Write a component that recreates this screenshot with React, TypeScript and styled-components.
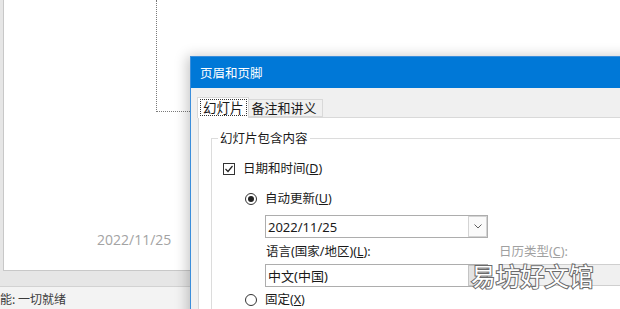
import React from "react";
import styled, { createGlobalStyle } from "styled-components";

const GlobalStyle = createGlobalStyle`
  html, body {
    margin: 0;
    padding: 0;
    width: 620px;
    height: 309px;
    overflow: hidden;
    background: #ffffff;
  }
  body {
    font-family: "Noto Sans", "Noto Sans CJK SC", sans-serif;
    color: #1a1a1a;
  }
  * { box-sizing: border-box; }
`;

const Screen = styled.div`
  position: relative;
  width: 620px;
  height: 309px;
  display: flex;
  flex-direction: column;
  overflow: hidden;
`;

const Workspace = styled.div`
  height: 288px;
  display: flex;
  background: #e6e6e6;
  padding: 0 0 15px 3px;
`;

const Slide = styled.div`
  position: relative;
  flex: 1;
  background: #ffffff;
  border-left: 1px solid #c8c8c8;
  border-bottom: 1px solid #c8c8c8;
`;

const Placeholder = styled.div`
  margin-left: 152px;
  width: 120px;
  height: 112px;
  border-left: 1px dotted #7a7a7a;
  border-bottom: 1px dotted #7a7a7a;
`;

const SlideDate = styled.div`
  position: absolute;
  left: 93px;
  top: 230px;
  font-family: "Open Sans", "Noto Sans", sans-serif;
  font-size: 14px;
  line-height: 20px;
  color: #a3a3a3;
`;

const StatusBar = styled.div`
  flex: 1;
  background: #f3f3f3;
  border-top: 1px solid #d2d2d2;
  font-size: 12px;
  line-height: 20px;
  padding-top: 2px;
  color: #3a3a3a;
  font-family: "Noto Sans CJK SC", sans-serif;
`;

const Dialog = styled.div`
  position: absolute;
  left: 190px;
  top: 56px;
  width: 450px;
  height: 270px;
  display: flex;
  flex-direction: column;
  border: 1px solid #3b8edb;
  background: #f0f0f0;
  box-shadow: -3px 0 12px rgba(0, 0, 0, 0.22);
  font-family: "Noto Sans", "Noto Sans CJK SC", sans-serif;
  font-size: 12.5px;
`;

const TitleBar = styled.div`
  height: 31px;
  flex: none;
  background: #0078d7;
  color: #ffffff;
  display: flex;
  align-items: center;
  padding-left: 9px;
  font-family: "Noto Sans CJK SC", sans-serif;
  font-size: 12.5px;
`;

const DialogBody = styled.div`
  flex: 1;
  padding: 9px 0 0 6px;
  display: flex;
  flex-direction: column;
`;

const TabStrip = styled.div`
  display: flex;
  align-items: flex-end;
  height: 20px;
  position: relative;
  z-index: 1;
`;

const Tab = styled.div<{ $active?: boolean }>`
  height: ${(p) => (p.$active ? "21px" : "18px")};
  margin-bottom: ${(p) => (p.$active ? "-1px" : "0")};
  background: ${(p) => (p.$active ? "#ffffff" : "#f0f0f0")};
  border: 1px solid #d9d9d9;
  border-bottom: ${(p) => (p.$active ? "none" : "1px solid #d9d9d9")};
  border-left: ${(p) => (p.$active ? "1px solid #d9d9d9" : "none")};
  padding: ${(p) => (p.$active ? "1px 1px 0 2px" : "0 5px 0 3px")};
  display: flex;
  align-items: ${(p) => (p.$active ? "flex-start" : "center")};
  font-family: "Noto Sans CJK SC", sans-serif;
  font-size: 13px;
  line-height: 16px;
`;

const FocusBox = styled.span`
  border: 1px dotted #333;
  padding: 0 2px;
  line-height: 15px;
  font-size: 13.5px;
`;

const Panel = styled.div`
  flex: 1;
  margin-left: 1px;
  background: #ffffff;
  border: 1px solid #d9d9d9;
  padding: 20px 0 0 12px;
`;

const Group = styled.div`
  position: relative;
  border: 1px solid #dcdcdc;
  border-right: none;
  padding: 21px 0 0 11px;
  height: 200px;
`;

const GroupLabel = styled.span`
  position: absolute;
  left: 6px;
  top: -9px;
  background: #ffffff;
  padding: 0 2px;
  line-height: 16px;
  font-family: "Noto Sans CJK SC", sans-serif;
  font-size: 12.5px;
`;

const OptionRow = styled.div<{ $indent?: number; $gap?: number }>`
  display: flex;
  align-items: center;
  height: 18px;
  margin-left: ${(p) => p.$indent ?? 0}px;
  margin-top: ${(p) => p.$gap ?? 0}px;
  gap: 8px;
  line-height: 18px;
`;

const CheckBox = styled.span`
  width: 12px;
  height: 12px;
  border: 1px solid #333;
  background: #fff;
  display: inline-flex;
  align-items: center;
  justify-content: center;
  flex: none;
`;

const Radio = styled.span<{ $on?: boolean }>`
  width: 12px;
  height: 12px;
  border: 1px solid #333;
  border-radius: 50%;
  display: inline-flex;
  align-items: center;
  justify-content: center;
  flex: none;
  &::after {
    content: "";
    width: 6px;
    height: 6px;
    border-radius: 50%;
    background: ${(p) => (p.$on ? "#222" : "transparent")};
  }
`;

const Fields = styled.div`
  margin-left: 42px;
  margin-top: 7px;
  display: grid;
  grid-template-columns: 223px 1fr;
  column-gap: 10px;
  row-gap: 0;
`;

const Combo = styled.div`
  height: 23px;
  border: 1px solid #adadad;
  background: #fff;
  display: flex;
  align-items: stretch;
`;

const ComboText = styled.span`
  flex: 1;
  padding-left: 2px;
  display: flex;
  align-items: center;
  font-size: 13px;
`;

const DropButton = styled.span<{ $gray?: boolean }>`
  width: 19px;
  border: 1px solid ${(p) => (p.$gray ? "#c4c4c4" : "#d4d4d4")};
  background: ${(p) => (p.$gray ? "#e3e3e3" : "#fafafa")};
  display: flex;
  align-items: center;
  justify-content: center;
`;

const FieldLabel = styled.div<{ $disabled?: boolean }>`
  height: 16px;
  margin: 6px 0 4px 1px;
  line-height: 16px;
  color: ${(p) => (p.$disabled ? "#a0a0a0" : "#1a1a1a")};
  font-size: 12.5px;
`;

const DisabledField = styled.div`
  height: 22px;
  border: 1px solid #cfcfcf;
  border-right: none;
  background: #f0f0f0;
`;

const Watermark = styled.div`
  position: absolute;
  left: 471px;
  top: 263px;
  font-family: "Noto Sans CJK SC", sans-serif;
  font-size: 24.5px;
  line-height: 25px;
  color: #ffffff;
  -webkit-text-stroke: 2px #6a6a6a;
  paint-order: stroke fill;
`;

const Chevron = () => (
  <svg width="8" height="5" viewBox="0 0 8 5">
    <path d="M0.5 0.5 L4 4 L7.5 0.5" fill="none" stroke="#606060" strokeWidth="1" />
  </svg>
);

const Check = () => (
  <svg width="10" height="10" viewBox="0 0 10 10">
    <path d="M1.5 5 L4 7.5 L8.5 2" fill="none" stroke="#222" strokeWidth="1.2" />
  </svg>
);

export default function App() {
  return (
    <>
      <GlobalStyle />
      <Screen>
        <Workspace>
          <Slide>
            <Placeholder />
            <SlideDate>2022/11/25</SlideDate>
          </Slide>
        </Workspace>
        <StatusBar>能: 一切就绪</StatusBar>

        <Dialog>
          <TitleBar>页眉和页脚</TitleBar>
          <DialogBody>
            <TabStrip>
              <Tab $active>
                <FocusBox>幻灯片</FocusBox>
              </Tab>
              <Tab>备注和讲义</Tab>
            </TabStrip>
            <Panel>
              <Group>
                <GroupLabel>幻灯片包含内容</GroupLabel>
                <OptionRow>
                  <CheckBox>
                    <Check />
                  </CheckBox>
                  <span>
                    日期和时间(<u>D</u>)
                  </span>
                </OptionRow>
                <OptionRow $indent={22} $gap={12}>
                  <Radio $on />
                  <span>
                    自动更新(<u>U</u>)
                  </span>
                </OptionRow>
                <Fields>
                  <Combo>
                    <ComboText>2022/11/25</ComboText>
                    <DropButton>
                      <Chevron />
                    </DropButton>
                  </Combo>
                  <div />
                  <FieldLabel>
                    语言(国家/地区)(<u>L</u>):
                  </FieldLabel>
                  <FieldLabel $disabled>
                    日历类型(<u>C</u>):
                  </FieldLabel>
                  <Combo>
                    <ComboText>中文(中国)</ComboText>
                    <DropButton $gray />
                  </Combo>
                  <DisabledField />
                </Fields>
                <OptionRow $indent={22} $gap={4}>
                  <Radio />
                  <span>
                    固定(<u>X</u>)
                  </span>
                </OptionRow>
              </Group>
            </Panel>
          </DialogBody>
        </Dialog>
        <Watermark>易坊好文馆</Watermark>
      </Screen>
    </>
  );
}
